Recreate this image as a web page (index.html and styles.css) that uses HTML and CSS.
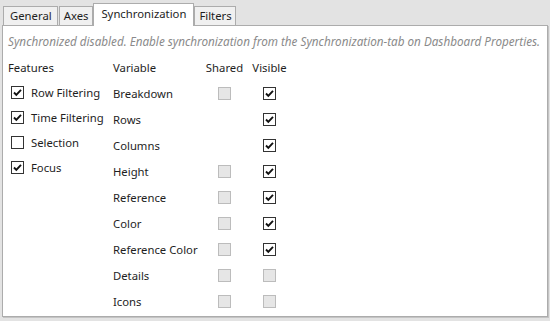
FILE: index.html
```html
<!DOCTYPE html>
<html lang="en">
<head>
    <meta charset="UTF-8">
    <title>Synchronization</title>
    <link rel="stylesheet" href="styles.css">
</head>
<body>
    <div class="tabs">
        <div class="tab first">General</div>
        <div class="tab axes">Axes</div>
        <div class="tab active">Synchronization</div>
        <div class="tab last">Filters</div>
    </div>
    <div class="panel">
        <div class="note">Synchronized disabled. Enable synchronization from the Synchronization-tab on Dashboard Properties.</div>
        <div class="cont">
            <div class="features">
                <div class="head">Features</div>
                <div class="feat"><span class="cb on"><svg viewBox="0 0 11 11"><path d="M2 5.5 L4.3 7.8 L9 2.8"/></svg></span>Row Filtering</div>
                <div class="feat"><span class="cb on"><svg viewBox="0 0 11 11"><path d="M2 5.5 L4.3 7.8 L9 2.8"/></svg></span>Time Filtering</div>
                <div class="feat"><span class="cb"></span>Selection</div>
                <div class="feat"><span class="cb on"><svg viewBox="0 0 11 11"><path d="M2 5.5 L4.3 7.8 L9 2.8"/></svg></span>Focus</div>
            </div>
            <div class="vars">
                <div class="head">Variable</div>
                <div class="head mid">Shared</div>
                <div class="head mid">Visible</div>

                <div>Breakdown</div>
                <div class="mid"><span class="cb off"></span></div>
                <div class="mid"><span class="cb on"><svg viewBox="0 0 11 11"><path d="M2 5.5 L4.3 7.8 L9 2.8"/></svg></span></div>

                <div>Rows</div>
                <div class="mid"></div>
                <div class="mid"><span class="cb on"><svg viewBox="0 0 11 11"><path d="M2 5.5 L4.3 7.8 L9 2.8"/></svg></span></div>

                <div>Columns</div>
                <div class="mid"></div>
                <div class="mid"><span class="cb on"><svg viewBox="0 0 11 11"><path d="M2 5.5 L4.3 7.8 L9 2.8"/></svg></span></div>

                <div>Height</div>
                <div class="mid"><span class="cb off"></span></div>
                <div class="mid"><span class="cb on"><svg viewBox="0 0 11 11"><path d="M2 5.5 L4.3 7.8 L9 2.8"/></svg></span></div>

                <div>Reference</div>
                <div class="mid"><span class="cb off"></span></div>
                <div class="mid"><span class="cb on"><svg viewBox="0 0 11 11"><path d="M2 5.5 L4.3 7.8 L9 2.8"/></svg></span></div>

                <div>Color</div>
                <div class="mid"><span class="cb off"></span></div>
                <div class="mid"><span class="cb on"><svg viewBox="0 0 11 11"><path d="M2 5.5 L4.3 7.8 L9 2.8"/></svg></span></div>

                <div>Reference Color</div>
                <div class="mid"><span class="cb off"></span></div>
                <div class="mid"><span class="cb on"><svg viewBox="0 0 11 11"><path d="M2 5.5 L4.3 7.8 L9 2.8"/></svg></span></div>

                <div>Details</div>
                <div class="mid"><span class="cb off"></span></div>
                <div class="mid"><span class="cb off"></span></div>

                <div>Icons</div>
                <div class="mid"><span class="cb off"></span></div>
                <div class="mid"><span class="cb off"></span></div>
            </div>
        </div>
    </div>
</body>
</html>
```

FILE: styles.css
```css
* {
    margin: 0;
    padding: 0;
    box-sizing: border-box;
}
body {
    background-color: #e3e3e3;
    font-family: "Noto Sans", sans-serif;
    font-size: 11.3px;
    color: #1e1e1e;
    width: 550px;
    height: 321px;
    overflow: hidden;
}
.tabs {
    display: flex;
    align-items: flex-end;
    height: 26px;
    padding-left: 3px;
    margin-bottom: -1px;
    position: relative;
    z-index: 1;
}
.tab {
    height: 19px;
    padding: 0 5px;
    line-height: 17px;
    background-color: #f0f0f0;
    border: 1px solid #acacac;
    border-bottom: none;
    margin-bottom: 1px;
}
.tab.first {
    padding: 0 5px 0 6px;
}
.tab.axes {
    padding: 0 4px;
    margin-left: 1px;
}
.tab.last {
    padding: 0 3px 0 4px;
}
.tab.active {
    height: 23px;
    line-height: 19px;
    padding: 0 7px;
    background-color: white;
    margin-bottom: 0;
}
.panel {
    margin: 0 2px;
    height: 292px;
    background-color: white;
    border: 1px solid #acacac;
    box-shadow: 1px 1px 0 #c4c4c4;
}
.note {
    color: #8a8a8a;
    font-style: italic;
    font-size: 11.7px;
    padding: 7px 0 0 5px;
    height: 29px;
    white-space: nowrap;
}
.cont {
    display: flex;
    padding-left: 5px;
}
.features {
    width: 105px;
}
.head {
    height: 25px;
    line-height: 25px;
}
.feat {
    height: 25px;
    display: flex;
    align-items: center;
}
.feat .cb {
    margin: 0 7px 0 3px;
}
.vars {
    display: grid;
    grid-template-columns: 90px 43px 47px;
    grid-auto-rows: 26px;
    align-items: center;
    margin-top: -1px;
}
.vars .head {
    height: auto;
}
.mid {
    display: flex;
    justify-content: center;
}
.cb {
    width: 13px;
    height: 13px;
    border: 1px solid #333;
    background-color: white;
    display: inline-flex;
    align-items: center;
    justify-content: center;
    flex-shrink: 0;
}
.cb.off {
    border-color: #bcbcbc;
    background-color: #e6e6e6;
}
.cb svg {
    width: 11px;
    height: 11px;
    fill: none;
    stroke: #111;
    stroke-width: 1.9;
}
```
